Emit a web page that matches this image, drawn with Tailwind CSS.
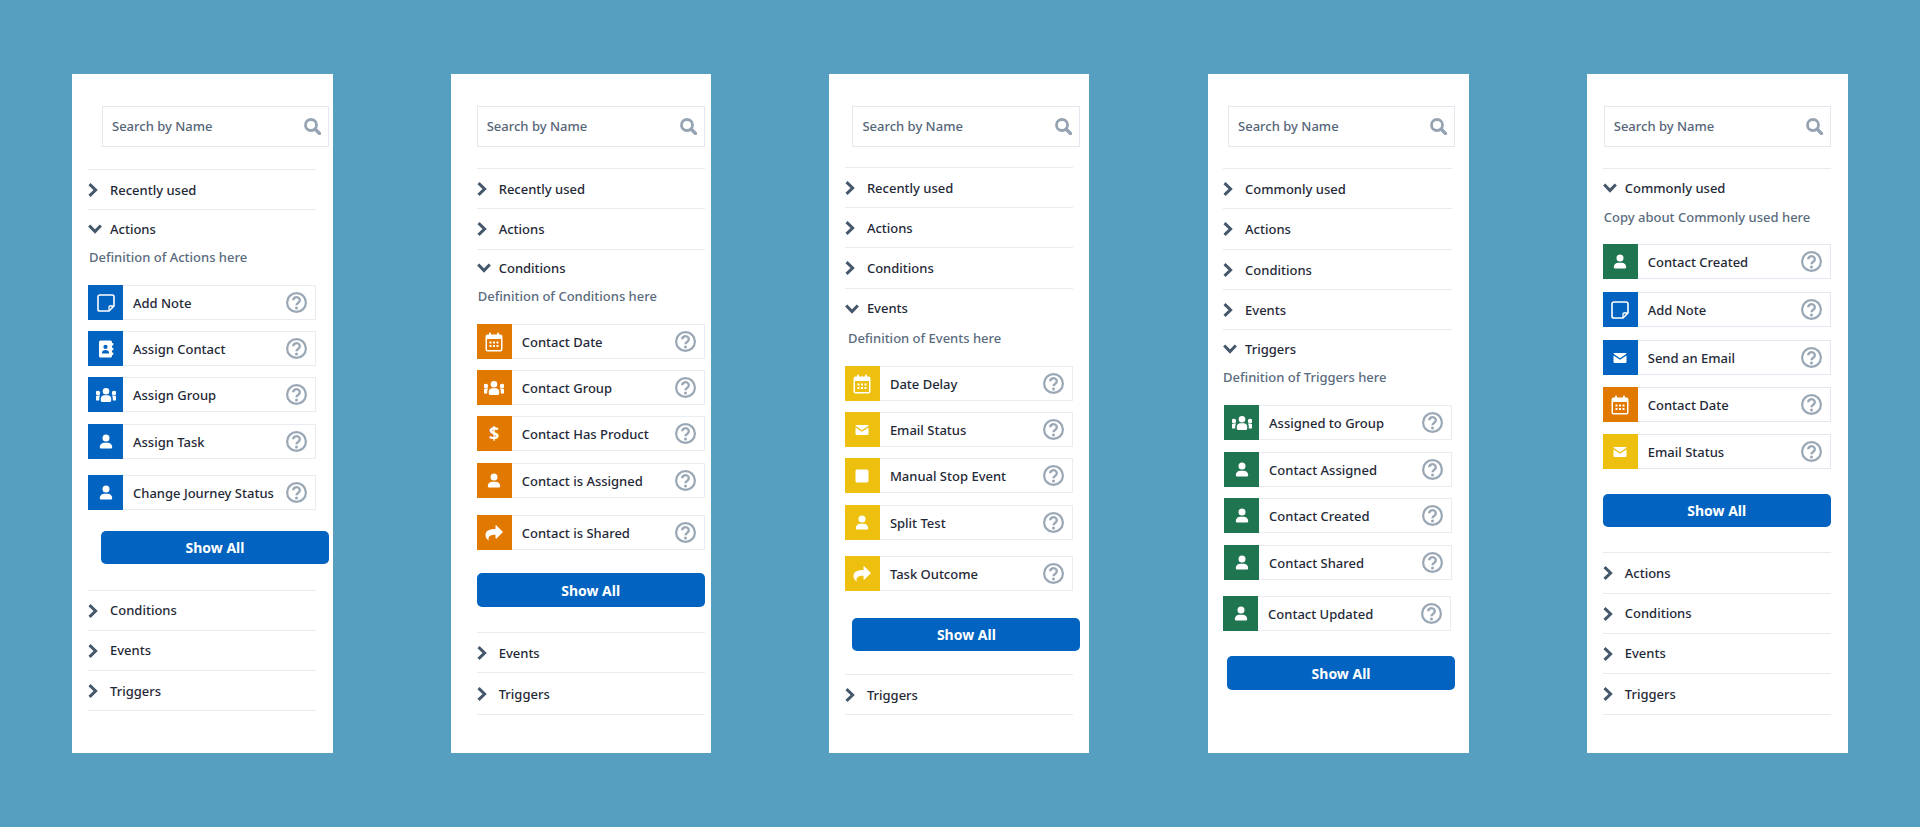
<!DOCTYPE html>
<html lang="en">
<head>
    <meta charset="UTF-8">
    <meta name="viewport" content="width=device-width, initial-scale=1.0">
    <title>Journey Builder Sidebar</title>
    <script src="https://cdn.jsdelivr.net/npm/@tailwindcss/browser@4"></script>
</head>
<body class="h-[827px] overflow-hidden bg-[#569fc1] font-['Noto_Sans',sans-serif] text-[13px] font-medium text-[#1f2937]">
    <!-- icon sprite -->
    <svg class="hidden">
        <symbol id="right" viewBox="0 0 10 14"><path d="M1.500 1.200 7.600 7l-6.100 5.800" fill="none" stroke="#44576b" stroke-width="3"/></symbol>
        <symbol id="down" viewBox="0 0 14 10"><path d="M1.200 1.500 7 7.600l5.800-6.100" fill="none" stroke="#44576b" stroke-width="3"/></symbol>
        <symbol id="search" viewBox="0 0 17 17"><circle cx="7" cy="7" r="5.500" fill="none" stroke="#95a3b2" stroke-width="2.800"/><path d="m11.200 11.200 4.300 4.300" stroke="#95a3b2" stroke-width="3.400" stroke-linecap="round"/></symbol>
        <symbol id="help" viewBox="0 0 21 21"><circle cx="10.500" cy="10.500" r="9.400" fill="none" stroke="#9aa7b5" stroke-width="2.200"/><path d="M7.200 8.200a3.300 3 0 1 1 5.100 2.500c-1.200.8-1.800 1.200-1.800 2.600" fill="none" stroke="#9aa7b5" stroke-width="2.400"/><circle cx="10.500" cy="16" r="1.500" fill="#9aa7b5"/></symbol>
        <symbol id="note" viewBox="0 0 20 20"><path d="M3.800 2h12.400A1.800 1.800 0 0 1 18 3.800V13l-5 5H3.800A1.800 1.800 0 0 1 2 16.200V3.800A1.800 1.800 0 0 1 3.800 2z" fill="none" stroke="currentColor" stroke-width="1.600"/><path d="M13 18v-4a1 1 0 0 1 1-1h4" fill="none" stroke="currentColor" stroke-width="1.300"/></symbol>
        <symbol id="contact" viewBox="0 0 20 20"><path fill="currentColor" fill-rule="evenodd" d="M4.500 1.500h10a1.500 1.500 0 0 1 1.500 1.500v14a1.500 1.500 0 0 1-1.500 1.500h-10A1.500 1.500 0 0 1 3 17V3a1.500 1.500 0 0 1 1.500-1.500zM9.500 5.800a2.100 2.100 0 1 0 0 4.200 2.100 2.100 0 0 0 0-4.200zM6 14.500h7v-1c0-1.500-1.600-2.400-3.500-2.400S6 12 6 13.500z"/><path fill="currentColor" d="M16 4h1.300v2.500H16zM16 8.800h1.300v2.500H16zM16 13.500h1.300V16H16z"/></symbol>
        <symbol id="group" viewBox="0 0 20 20" overflow="visible"><g fill="currentColor"><circle cx="10" cy="6.300" r="3.300"/><path d="M4.800 13.500c0-2 1.600-3.300 3.300-3.300h3.800c1.700 0 3.300 1.300 3.300 3.300v2c0 .9-.7 1.500-1.500 1.500H6.300c-.8 0-1.500-.6-1.500-1.500z"/><circle cx="1.900" cy="8" r="2.300"/><path d="M-.5 13c0-1.500.9-2.400 2.200-2.400h2.600c-.7.800-1.100 1.800-1.100 2.900v2H1c-.8 0-1.500-.6-1.500-1.300z"/><circle cx="18.100" cy="8" r="2.300"/><path d="M20.500 13c0-1.500-.9-2.400-2.200-2.400h-2.600c.7.800 1.100 1.800 1.100 2.900v2H19c.8 0 1.500-.6 1.500-1.300z"/></g></symbol>
        <symbol id="person" viewBox="0 0 20 20"><g fill="currentColor"><circle cx="10" cy="6" r="3.500"/><path d="M3.800 15c0-2.700 2-4.300 4.500-4.300h3.400c2.500 0 4.500 1.600 4.500 4.300 0 .9-.7 1.600-1.600 1.600H5.400c-.9 0-1.600-.7-1.600-1.600z"/></g></symbol>
        <symbol id="calendar" viewBox="0 0 20 20"><g fill="currentColor"><path fill-rule="evenodd" d="M3.500 2.500h13a2 2 0 0 1 2 2v13a2 2 0 0 1-2 2h-13a2 2 0 0 1-2-2v-13a2 2 0 0 1 2-2zM3 7v10.500c0 .3.200.5.500.5h13c.3 0 .5-.2.500-.5V7z"/><rect x="5" y="0.500" width="2" height="3.500" rx="1"/><rect x="13" y="0.500" width="2" height="3.500" rx="1"/><path d="M5.500 9.500h2v2h-2zM9 9.500h2v2H9zM12.500 9.500h2v2h-2zM5.500 13h2v2h-2zM9 13h2v2H9zM12.500 13h2v2h-2z"/></g></symbol>
        <symbol id="share" viewBox="0 0 20 20"><path fill="currentColor" d="M11.500 2.500a.6.600 0 0 1 1 0l6 6a.7.700 0 0 1 0 1l-6 6a.6.600 0 0 1-1-.4v-3.300c-4.500 0-7 1-7 4.200 0 .7.200 1.300.4 1.700-2-1.200-3.400-3.200-3.400-5.600 0-5 4.500-6 10-6.100V2.900z"/></symbol>
        <symbol id="mail" viewBox="0 0 20 20"><g fill="currentColor"><path d="M4.300 5h11.400c.8 0 1 .7.500 1.100L10 10.200 3.800 6.100C3.300 5.700 3.500 5 4.300 5z"/><path d="M3.500 7.400 10 11.700l6.500-4.300V14a1 1 0 0 1-1 1h-11a1 1 0 0 1-1-1z"/></g></symbol>
        <symbol id="square" viewBox="0 0 20 20"><rect x="3.500" y="3.500" width="13" height="13" rx="1.500" fill="currentColor"/></symbol>
    </svg>

    <main class="flex items-start gap-[118.2px] pl-[72px] pt-[74px]">

        <!-- Actions open -->
        <section class="h-[679px] w-[260.5px] shrink-0 bg-white pl-[16px] pt-[32px]">
            <div class="ml-[14px] flex h-[41px] w-[227px] items-center justify-between border-[1.5px] border-[#e4e8ee] pl-[9px] pr-[7px] text-[#566679]"><span>Search by Name</span><svg class="h-[17px] w-[17px]"><use href="#search"/></svg></div>
            <div class="mt-[22px] w-[228px]">
                <div class="flex h-[40px] items-center border-t border-[#e8ebee]"><svg class="h-[14px] w-[10px]"><use href="#right"/></svg><span class="ml-[12px] pt-[2px]">Recently used</span></div>
                <div class="flex h-[38px] items-center border-t border-[#e8ebee]"><svg class="h-[10px] w-[14px]"><use href="#down"/></svg><span class="ml-[8px] pt-[2px]">Actions</span></div>
                <p class="ml-px h-5 leading-5 text-[#5a6b7d]">Definition of Actions here</p>
                <div class="mt-[18px] flex h-[35px]"><div class="flex w-[35px] shrink-0 items-center justify-center bg-[#0263c0] text-white"><svg class="h-5 w-5"><use href="#note"/></svg></div><div class="flex flex-1 items-center justify-between border border-l-0 border-[#e9ecf0] pl-[10px] pr-[8px]"><span class="pt-[2px]">Add Note</span><svg class="h-[21px] w-[21px]"><use href="#help"/></svg></div></div>
                <div class="mt-[11px] flex h-[35px]"><div class="flex w-[35px] shrink-0 items-center justify-center bg-[#0263c0] text-white"><svg class="h-5 w-5"><use href="#contact"/></svg></div><div class="flex flex-1 items-center justify-between border border-l-0 border-[#e9ecf0] pl-[10px] pr-[8px]"><span class="pt-[2px]">Assign Contact</span><svg class="h-[21px] w-[21px]"><use href="#help"/></svg></div></div>
                <div class="mt-[11px] flex h-[35px]"><div class="flex w-[35px] shrink-0 items-center justify-center bg-[#0263c0] text-white"><svg class="h-5 w-5"><use href="#group"/></svg></div><div class="flex flex-1 items-center justify-between border border-l-0 border-[#e9ecf0] pl-[10px] pr-[8px]"><span class="pt-[2px]">Assign Group</span><svg class="h-[21px] w-[21px]"><use href="#help"/></svg></div></div>
                <div class="mt-[12px] flex h-[35px]"><div class="flex w-[35px] shrink-0 items-center justify-center bg-[#0263c0] text-white"><svg class="h-5 w-5"><use href="#person"/></svg></div><div class="flex flex-1 items-center justify-between border border-l-0 border-[#e9ecf0] pl-[10px] pr-[8px]"><span class="pt-[2px]">Assign Task</span><svg class="h-[21px] w-[21px]"><use href="#help"/></svg></div></div>
                <div class="mt-[16px] flex h-[35px]"><div class="flex w-[35px] shrink-0 items-center justify-center bg-[#0263c0] text-white"><svg class="h-5 w-5"><use href="#person"/></svg></div><div class="flex flex-1 items-center justify-between border border-l-0 border-[#e9ecf0] pl-[10px] pr-[8px]"><span class="pt-[2px]">Change Journey Status</span><svg class="h-[21px] w-[21px]"><use href="#help"/></svg></div></div>
            </div>
            <button class="ml-[13px] mt-[21px] block h-[33px] w-[228px] rounded-[5px] bg-[#0263c0] text-[14px] font-bold text-white">Show All</button>
            <div class="mt-[26px] w-[228px] border-b border-[#e8ebee]">
                <div class="flex h-[40px] items-center border-t border-[#e8ebee]"><svg class="h-[14px] w-[10px]"><use href="#right"/></svg><span class="ml-[12px]">Conditions</span></div>
                <div class="flex h-[40px] items-center border-t border-[#e8ebee]"><svg class="h-[14px] w-[10px]"><use href="#right"/></svg><span class="ml-[12px]">Events</span></div>
                <div class="flex h-[40px] items-center border-t border-[#e8ebee]"><svg class="h-[14px] w-[10px]"><use href="#right"/></svg><span class="ml-[12px] pt-[2px]">Triggers</span></div>
            </div>
        </section>

        <!-- Conditions open -->
        <section class="h-[679px] w-[260.5px] shrink-0 bg-white pl-[26px] pt-[32px]">
            <div class="flex h-[41px] w-[228px] items-center justify-between border-[1.5px] border-[#e4e8ee] pl-[9px] pr-[7px] text-[#566679]"><span>Search by Name</span><svg class="h-[17px] w-[17px]"><use href="#search"/></svg></div>
            <div class="mt-[21px] w-[228px]">
                <div class="flex h-[40px] items-center border-t border-[#e8ebee]"><svg class="h-[14px] w-[10px]"><use href="#right"/></svg><span class="ml-[12px] pt-[2px]">Recently used</span></div>
                <div class="flex h-[41px] items-center border-t border-[#e8ebee]"><svg class="h-[14px] w-[10px]"><use href="#right"/></svg><span class="ml-[12px] pt-[2px]">Actions</span></div>
                <div class="flex h-[37px] items-center border-t border-[#e8ebee]"><svg class="h-[10px] w-[14px]"><use href="#down"/></svg><span class="ml-[8px] pt-[2px]">Conditions</span></div>
                <p class="ml-px h-5 leading-5 text-[#5a6b7d]">Definition of Conditions here</p>
                <div class="mt-[18px] flex h-[35px]"><div class="flex w-[35px] shrink-0 items-center justify-center bg-[#e17800] text-white"><svg class="h-5 w-5"><use href="#calendar"/></svg></div><div class="flex flex-1 items-center justify-between border border-l-0 border-[#e9ecf0] pl-[10px] pr-[8px]"><span class="pt-[2px]">Contact Date</span><svg class="h-[21px] w-[21px]"><use href="#help"/></svg></div></div>
                <div class="mt-[11px] flex h-[35px]"><div class="flex w-[35px] shrink-0 items-center justify-center bg-[#e17800] text-white"><svg class="h-5 w-5"><use href="#group"/></svg></div><div class="flex flex-1 items-center justify-between border border-l-0 border-[#e9ecf0] pl-[10px] pr-[8px]"><span class="pt-[2px]">Contact Group</span><svg class="h-[21px] w-[21px]"><use href="#help"/></svg></div></div>
                <div class="mt-[11px] flex h-[35px]"><div class="flex w-[35px] shrink-0 items-center justify-center bg-[#e17800] text-[18px] font-bold text-white">$</div><div class="flex flex-1 items-center justify-between border border-l-0 border-[#e9ecf0] pl-[10px] pr-[8px]"><span class="pt-[2px]">Contact Has Product</span><svg class="h-[21px] w-[21px]"><use href="#help"/></svg></div></div>
                <div class="mt-[12px] flex h-[35px]"><div class="flex w-[35px] shrink-0 items-center justify-center bg-[#e17800] text-white"><svg class="h-5 w-5"><use href="#person"/></svg></div><div class="flex flex-1 items-center justify-between border border-l-0 border-[#e9ecf0] pl-[10px] pr-[8px]"><span class="pt-[2px]">Contact is Assigned</span><svg class="h-[21px] w-[21px]"><use href="#help"/></svg></div></div>
                <div class="mt-[17px] flex h-[35px]"><div class="flex w-[35px] shrink-0 items-center justify-center bg-[#e17800] text-white"><svg class="h-5 w-5"><use href="#share"/></svg></div><div class="flex flex-1 items-center justify-between border border-l-0 border-[#e9ecf0] pl-[10px] pr-[8px]"><span class="pt-[2px]">Contact is Shared</span><svg class="h-[21px] w-[21px]"><use href="#help"/></svg></div></div>
            </div>
            <button class="mt-[23px] block h-[34px] w-[228px] rounded-[5px] bg-[#0263c0] text-[14px] font-bold text-white">Show All</button>
            <div class="mt-[25px] w-[228px] border-b border-[#e8ebee]">
                <div class="flex h-[40px] items-center border-t border-[#e8ebee]"><svg class="h-[14px] w-[10px]"><use href="#right"/></svg><span class="ml-[12px] pt-[2px]">Events</span></div>
                <div class="flex h-[42px] items-center border-t border-[#e8ebee]"><svg class="h-[14px] w-[10px]"><use href="#right"/></svg><span class="ml-[12px] pt-[2px]">Triggers</span></div>
            </div>
        </section>

        <!-- Events open -->
        <section class="mr-[0.5px] h-[679px] w-[260px] shrink-0 bg-white pl-[15.5px] pt-[32px]">
            <div class="ml-[7.5px] flex h-[41px] w-[228px] items-center justify-between border-[1.5px] border-[#e4e8ee] pl-[9px] pr-[7px] text-[#566679]"><span>Search by Name</span><svg class="h-[17px] w-[17px]"><use href="#search"/></svg></div>
            <div class="mt-[20px] w-[228px]">
                <div class="flex h-[40px] items-center border-t border-[#e8ebee]"><svg class="h-[14px] w-[10px]"><use href="#right"/></svg><span class="ml-[12px] pt-[2px]">Recently used</span></div>
                <div class="flex h-[40px] items-center border-t border-[#e8ebee]"><svg class="h-[14px] w-[10px]"><use href="#right"/></svg><span class="ml-[12px] pt-[2px]">Actions</span></div>
                <div class="flex h-[41px] items-center border-t border-[#e8ebee]"><svg class="h-[14px] w-[10px]"><use href="#right"/></svg><span class="ml-[12px] pt-[2px]">Conditions</span></div>
                <div class="flex h-[40px] items-center border-t border-[#e8ebee]"><svg class="h-[10px] w-[14px]"><use href="#down"/></svg><span class="ml-[8px]">Events</span></div>
                <p class="ml-[3px] h-5 leading-5 text-[#5a6b7d]">Definition of Events here</p>
                <div class="mt-[18px] flex h-[35px]"><div class="flex w-[35px] shrink-0 items-center justify-center bg-[#edc00f] text-white"><svg class="h-5 w-5"><use href="#calendar"/></svg></div><div class="flex flex-1 items-center justify-between border border-l-0 border-[#e9ecf0] pl-[10px] pr-[8px]"><span class="pt-[2px]">Date Delay</span><svg class="h-[21px] w-[21px]"><use href="#help"/></svg></div></div>
                <div class="mt-[11px] flex h-[35px]"><div class="flex w-[35px] shrink-0 items-center justify-center bg-[#edc00f] text-white"><svg class="h-5 w-5"><use href="#mail"/></svg></div><div class="flex flex-1 items-center justify-between border border-l-0 border-[#e9ecf0] pl-[10px] pr-[8px]"><span class="pt-[2px]">Email Status</span><svg class="h-[21px] w-[21px]"><use href="#help"/></svg></div></div>
                <div class="mt-[11px] flex h-[35px]"><div class="flex w-[35px] shrink-0 items-center justify-center bg-[#edc00f] text-white"><svg class="h-5 w-5"><use href="#square"/></svg></div><div class="flex flex-1 items-center justify-between border border-l-0 border-[#e9ecf0] pl-[10px] pr-[8px]"><span class="pt-[2px]">Manual Stop Event</span><svg class="h-[21px] w-[21px]"><use href="#help"/></svg></div></div>
                <div class="mt-[12px] flex h-[35px]"><div class="flex w-[35px] shrink-0 items-center justify-center bg-[#edc00f] text-white"><svg class="h-5 w-5"><use href="#person"/></svg></div><div class="flex flex-1 items-center justify-between border border-l-0 border-[#e9ecf0] pl-[10px] pr-[8px]"><span class="pt-[2px]">Split Test</span><svg class="h-[21px] w-[21px]"><use href="#help"/></svg></div></div>
                <div class="mt-[16px] flex h-[35px]"><div class="flex w-[35px] shrink-0 items-center justify-center bg-[#edc00f] text-white"><svg class="h-5 w-5"><use href="#share"/></svg></div><div class="flex flex-1 items-center justify-between border border-l-0 border-[#e9ecf0] pl-[10px] pr-[8px]"><span class="pt-[2px]">Task Outcome</span><svg class="h-[21px] w-[21px]"><use href="#help"/></svg></div></div>
            </div>
            <button class="ml-[7.5px] mt-[27px] block h-[33px] w-[228px] rounded-[5px] bg-[#0263c0] text-[14px] font-bold text-white">Show All</button>
            <div class="mt-[23px] w-[228px] border-b border-[#e8ebee]">
                <div class="flex h-[40px] items-center border-t border-[#e8ebee]"><svg class="h-[14px] w-[10px]"><use href="#right"/></svg><span class="ml-[12px] pt-[2px]">Triggers</span></div>
            </div>
        </section>

        <!-- Triggers open -->
        <section class="h-[679px] w-[260.5px] shrink-0 bg-white pl-[15px] pt-[32px]">
            <div class="ml-[5px] flex h-[41px] w-[227px] items-center justify-between border-[1.5px] border-[#e4e8ee] pl-[9px] pr-[7px] text-[#566679]"><span>Search by Name</span><svg class="h-[17px] w-[17px]"><use href="#search"/></svg></div>
            <div class="mt-[21px] w-[229px]">
                <div class="flex h-[40px] items-center border-t border-[#e8ebee]"><svg class="h-[14px] w-[10px]"><use href="#right"/></svg><span class="ml-[12px] pt-[2px]">Commonly used</span></div>
                <div class="flex h-[41px] items-center border-t border-[#e8ebee]"><svg class="h-[14px] w-[10px]"><use href="#right"/></svg><span class="ml-[12px] pt-[2px]">Actions</span></div>
                <div class="flex h-[40px] items-center border-t border-[#e8ebee]"><svg class="h-[14px] w-[10px]"><use href="#right"/></svg><span class="ml-[12px] pt-[2px]">Conditions</span></div>
                <div class="flex h-[40px] items-center border-t border-[#e8ebee]"><svg class="h-[14px] w-[10px]"><use href="#right"/></svg><span class="ml-[12px] pt-[2px]">Events</span></div>
                <div class="flex h-[38px] items-center border-t border-[#e8ebee]"><svg class="h-[10px] w-[14px]"><use href="#down"/></svg><span class="ml-[8px] pt-[2px]">Triggers</span></div>
                <p class="h-5 leading-5 text-[#5a6b7d]">Definition of Triggers here</p>
                <div class="ml-px mt-[18px] flex h-[35px]"><div class="flex w-[35px] shrink-0 items-center justify-center bg-[#1f7550] text-white"><svg class="h-5 w-5"><use href="#group"/></svg></div><div class="flex flex-1 items-center justify-between border border-l-0 border-[#e9ecf0] pl-[10px] pr-[8px]"><span class="pt-[2px]">Assigned to Group</span><svg class="h-[21px] w-[21px]"><use href="#help"/></svg></div></div>
                <div class="ml-px mt-[12px] flex h-[35px]"><div class="flex w-[35px] shrink-0 items-center justify-center bg-[#1f7550] text-white"><svg class="h-5 w-5"><use href="#person"/></svg></div><div class="flex flex-1 items-center justify-between border border-l-0 border-[#e9ecf0] pl-[10px] pr-[8px]"><span class="pt-[2px]">Contact Assigned</span><svg class="h-[21px] w-[21px]"><use href="#help"/></svg></div></div>
                <div class="ml-px mt-[11px] flex h-[35px]"><div class="flex w-[35px] shrink-0 items-center justify-center bg-[#1f7550] text-white"><svg class="h-5 w-5"><use href="#person"/></svg></div><div class="flex flex-1 items-center justify-between border border-l-0 border-[#e9ecf0] pl-[10px] pr-[8px]"><span class="pt-[2px]">Contact Created</span><svg class="h-[21px] w-[21px]"><use href="#help"/></svg></div></div>
                <div class="ml-px mt-[12px] flex h-[35px]"><div class="flex w-[35px] shrink-0 items-center justify-center bg-[#1f7550] text-white"><svg class="h-5 w-5"><use href="#person"/></svg></div><div class="flex flex-1 items-center justify-between border border-l-0 border-[#e9ecf0] pl-[10px] pr-[8px]"><span class="pt-[2px]">Contact Shared</span><svg class="h-[21px] w-[21px]"><use href="#help"/></svg></div></div>
                <div class="mr-px mt-[16px] flex h-[35px]"><div class="flex w-[35px] shrink-0 items-center justify-center bg-[#1f7550] text-white"><svg class="h-5 w-5"><use href="#person"/></svg></div><div class="flex flex-1 items-center justify-between border border-l-0 border-[#e9ecf0] pl-[10px] pr-[8px]"><span class="pt-[2px]">Contact Updated</span><svg class="h-[21px] w-[21px]"><use href="#help"/></svg></div></div>
            </div>
            <button class="ml-[4px] mt-[25px] block h-[34px] w-[228px] rounded-[5px] bg-[#0263c0] text-[14px] font-bold text-white">Show All</button>
        </section>

        <!-- Commonly used open -->
        <section class="h-[679px] w-[261px] shrink-0 bg-white pl-[16px] pt-[32px]">
            <div class="ml-px flex h-[41px] w-[227px] items-center justify-between border-[1.5px] border-[#e4e8ee] pl-[9px] pr-[7px] text-[#566679]"><span>Search by Name</span><svg class="h-[17px] w-[17px]"><use href="#search"/></svg></div>
            <div class="mt-[21px] w-[228px]">
                <div class="flex h-[39px] items-center border-t border-[#e8ebee]"><svg class="h-[10px] w-[14px]"><use href="#down"/></svg><span class="ml-[8px] pt-[2px]">Commonly used</span></div>
                <p class="ml-px h-5 leading-5 text-[#5a6b7d]">Copy about Commonly used here</p>
                <div class="mt-[17px] flex h-[35px]"><div class="flex w-[35px] shrink-0 items-center justify-center bg-[#1f7550] text-white"><svg class="h-5 w-5"><use href="#person"/></svg></div><div class="flex flex-1 items-center justify-between border border-l-0 border-[#e3e8f0] pl-[10px] pr-[8px]"><span class="pt-[2px]">Contact Created</span><svg class="h-[21px] w-[21px]"><use href="#help"/></svg></div></div>
                <div class="mt-[13px] flex h-[35px]"><div class="flex w-[35px] shrink-0 items-center justify-center bg-[#0263c0] text-white"><svg class="h-5 w-5"><use href="#note"/></svg></div><div class="flex flex-1 items-center justify-between border border-l-0 border-[#e3e8f0] pl-[10px] pr-[8px]"><span class="pt-[2px]">Add Note</span><svg class="h-[21px] w-[21px]"><use href="#help"/></svg></div></div>
                <div class="mt-[13px] flex h-[35px]"><div class="flex w-[35px] shrink-0 items-center justify-center bg-[#0263c0] text-white"><svg class="h-5 w-5"><use href="#mail"/></svg></div><div class="flex flex-1 items-center justify-between border border-l-0 border-[#e3e8f0] pl-[10px] pr-[8px]"><span class="pt-[2px]">Send an Email</span><svg class="h-[21px] w-[21px]"><use href="#help"/></svg></div></div>
                <div class="mt-[12px] flex h-[35px]"><div class="flex w-[35px] shrink-0 items-center justify-center bg-[#e17800] text-white"><svg class="h-5 w-5"><use href="#calendar"/></svg></div><div class="flex flex-1 items-center justify-between border border-l-0 border-[#e3e8f0] pl-[10px] pr-[8px]"><span class="pt-[2px]">Contact Date</span><svg class="h-[21px] w-[21px]"><use href="#help"/></svg></div></div>
                <div class="mt-[12px] flex h-[35px]"><div class="flex w-[35px] shrink-0 items-center justify-center bg-[#edc00f] text-white"><svg class="h-5 w-5"><use href="#mail"/></svg></div><div class="flex flex-1 items-center justify-between border border-l-0 border-[#e3e8f0] pl-[10px] pr-[8px]"><span class="pt-[2px]">Email Status</span><svg class="h-[21px] w-[21px]"><use href="#help"/></svg></div></div>
            </div>
            <button class="mt-[25px] block h-[33px] w-[228px] rounded-[5px] bg-[#0263c0] text-[14px] font-bold text-white">Show All</button>
            <div class="mt-[25px] w-[228px] border-b border-[#e8ebee]">
                <div class="flex h-[41px] items-center border-t border-[#e8ebee]"><svg class="h-[14px] w-[10px]"><use href="#right"/></svg><span class="ml-[12px] pt-[2px]">Actions</span></div>
                <div class="flex h-[40px] items-center border-t border-[#e8ebee]"><svg class="h-[14px] w-[10px]"><use href="#right"/></svg><span class="ml-[12px]">Conditions</span></div>
                <div class="flex h-[40px] items-center border-t border-[#e8ebee]"><svg class="h-[14px] w-[10px]"><use href="#right"/></svg><span class="ml-[12px]">Events</span></div>
                <div class="flex h-[41px] items-center border-t border-[#e8ebee]"><svg class="h-[14px] w-[10px]"><use href="#right"/></svg><span class="ml-[12px] pt-[2px]">Triggers</span></div>
            </div>
        </section>
    </main>
</body>
</html>
